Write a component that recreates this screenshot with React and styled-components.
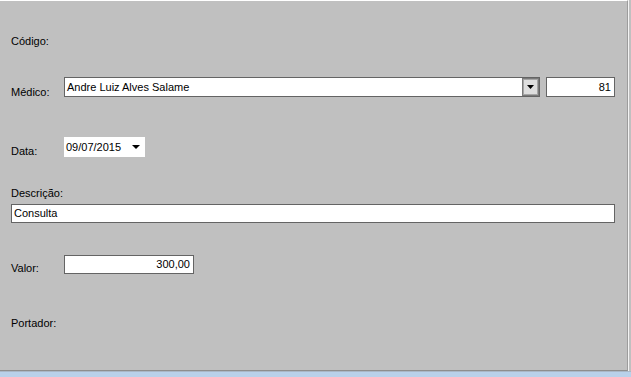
import React from "react";
import styled, { createGlobalStyle } from "styled-components";

const GlobalStyle = createGlobalStyle`
  html, body {
    margin: 0;
    padding: 0;
    background: #c0c0c0;
  }
  body {
    font-family: "Liberation Sans", Arial, sans-serif;
    font-size: 11px;
    color: #000;
  }
`;

const Window = styled.div`
  width: 631px;
  height: 377px;
  display: flex;
  flex-direction: column;
  background: #c0c0c0;
  overflow: hidden;
`;

const Panel = styled.div`
  width: 628px;
  height: 371px;
  flex-shrink: 0;
  border-top: 1px solid #ffffff;
  border-right: 1px solid #9c9c9c;
  border-bottom: 1px solid #8e8e8e;
  box-shadow: 1px 0 0 #f4f4f4;
  box-sizing: border-box;
  background: #c0c0c0;
`;

const Footer = styled.div`
  flex: 1;
  border-top: 1px solid #a9b8c8;
  background: #b9d1ea;
`;

const Form = styled.div`
  width: 604px;
  padding: 34px 0 0 11px;
  display: flex;
  flex-direction: column;
`;

const Row = styled.div`
  display: flex;
  align-items: flex-start;
  margin-top: ${(p) => p.$top || 0}px;
`;

const Label = styled.div`
  width: ${(p) => (p.$wide ? "auto" : "53px")};
  flex-shrink: 0;
  line-height: 13px;
  padding-top: ${(p) => p.$offset || 0}px;
  white-space: nowrap;
`;

const Field = styled.div`
  box-sizing: border-box;
  height: ${(p) => p.$h || 19}px;
  width: ${(p) => (p.$w ? `${p.$w}px` : "auto")};
  flex: ${(p) => (p.$w ? "none" : 1)};
  margin-left: ${(p) => p.$ml || 0}px;
  background: #ffffff;
  border: 1px solid #646464;
  display: flex;
  align-items: center;
  justify-content: ${(p) => (p.$right ? "flex-end" : "flex-start")};
  padding: 0 3px 0 2px;
  line-height: 13px;
  white-space: nowrap;
`;

const Combo = styled.div`
  box-sizing: border-box;
  flex: 1;
  height: 20px;
  background: #ffffff;
  border: 1px solid #646464;
  display: flex;
  align-items: stretch;
`;

const ComboText = styled.div`
  flex: 1;
  display: flex;
  align-items: center;
  padding-left: 2px;
  line-height: 13px;
`;

const ComboButton = styled.div`
  width: 17px;
  box-sizing: border-box;
  border: 1px solid #7a7a7a;
  box-shadow: inset 0 0 0 1px #a6a6a6;
  background: #dedede;
  display: flex;
  align-items: center;
  justify-content: center;
`;

const DatePicker = styled.div`
  box-sizing: border-box;
  width: 81px;
  height: 20px;
  background: #ffffff;
  display: flex;
  align-items: center;
  justify-content: space-between;
  padding: 0 5px 0 2px;
  line-height: 13px;
`;

const Arrow = ({ w = 7 }) => (
  <svg width={w} height="4" viewBox={`0 0 ${w} 4`}>
    <polygon points={`0,0 ${w},0 ${w / 2},4`} fill="#000" />
  </svg>
);

export default function App() {
  return (
    <>
      <GlobalStyle />
      <Window>
        <Panel>
          <Form>
            <Label $wide>Código:</Label>

            <Row $top={29}>
              <Label $offset={9}>Médico:</Label>
              <Combo>
                <ComboText>Andre Luiz Alves Salame</ComboText>
                <ComboButton>
                  <Arrow />
                </ComboButton>
              </Combo>
              <Field $w={69} $h={20} $ml={6} $right>
                81
              </Field>
            </Row>

            <Row $top={38}>
              <Label $offset={8}>Data:</Label>
              <DatePicker>
                <span>09/07/2015</span>
                <Arrow w={8} />
              </DatePicker>
            </Row>

            <Row $top={29}>
              <Label $wide>Descrição:</Label>
            </Row>
            <Row $top={4}>
              <Field>Consulta</Field>
            </Row>

            <Row $top={32}>
              <Label $offset={7}>Valor:</Label>
              <Field $w={130} $right>
                300,00
              </Field>
            </Row>

            <Row $top={42}>
              <Label $wide>Portador:</Label>
            </Row>
          </Form>
        </Panel>
        <Footer />
      </Window>
    </>
  );
}
